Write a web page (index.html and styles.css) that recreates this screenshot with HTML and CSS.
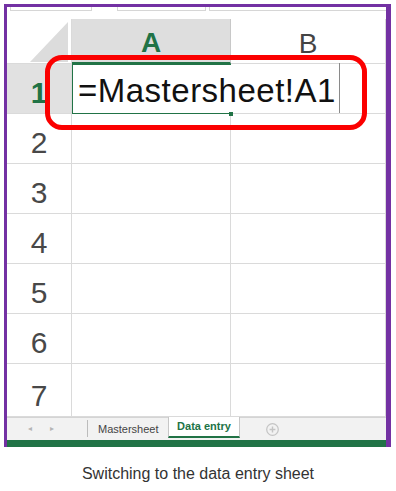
FILE: index.html
```html
<!doctype html>
<html>

<head>
    <meta charset="utf-8" />
    <title>Data entry</title>
    <link rel="stylesheet" href="styles.css">
</head>

<body>
    <div id="wrap">
        <!-- bottom edge of the formula bar boxes, cut off by the crop -->
        <div class="ribbon">
            <span class="box name"></span>
            <span class="box fx"></span>
            <span class="box bar"></span>
        </div>

        <div class="sheet">
            <div class="grid">
                <div class="corner"></div>
                <div class="colhead sel">A</div>
                <div class="colhead">B</div>

                <div class="rowhead sel">1</div>
                <div class="cell edit">
                    <span class="formula">=Mastersheet!A1</span>
                    <span class="caret"></span>
                    <i class="handle"></i>
                </div>
                <div class="cell"></div>

                <div class="rowhead">2</div>
                <div class="cell"></div>
                <div class="cell"></div>

                <div class="rowhead">3</div>
                <div class="cell"></div>
                <div class="cell"></div>

                <div class="rowhead">4</div>
                <div class="cell"></div>
                <div class="cell"></div>

                <div class="rowhead">5</div>
                <div class="cell"></div>
                <div class="cell"></div>

                <div class="rowhead">6</div>
                <div class="cell"></div>
                <div class="cell"></div>

                <div class="rowhead">7</div>
                <div class="cell"></div>
                <div class="cell"></div>
            </div>
            <!-- red annotation round the formula -->
            <div class="callout"></div>
        </div>

        <div class="tabs">
            <div class="nav">
                <span class="arrow">&#9666;</span>
                <span class="arrow">&#9656;</span>
            </div>
            <div class="tab">Mastersheet</div>
            <div class="tab active">Data entry</div>
            <span class="add">
                <svg width="13" height="13" viewBox="0 0 13 13">
                    <circle cx="6.5" cy="6.5" r="5.8" fill="none" stroke="#c4c4c4" stroke-width="1.2" />
                    <path d="M6.5 3.6v5.8M3.6 6.5h5.8" stroke="#c4c4c4" stroke-width="1.4" />
                </svg>
            </span>
        </div>
        <div class="status"></div>
    </div>

    <p class="caption">Switching to the data entry sheet</p>
</body>

</html>
```

FILE: styles.css
```css
* {
    margin: 0;
    padding: 0;
    box-sizing: border-box;
}

html,
body {
    background: #fff;
    font-family: "Liberation Sans", Arial, sans-serif;
}

#wrap {
    width: 387px;
    margin: 4px 0 0 4px;
    border: 3px solid #7331a3;
    border-right-width: 5px;
    border-bottom: none;
    background: #fff;
}

/* top strip */
#wrap .ribbon {
    height: 12px;
    display: flex;
    padding-left: 3px;
}

#wrap .ribbon .box {
    height: 4px;
    border: 1px solid #d6d6d6;
    border-top: none;
}

#wrap .ribbon .name {
    width: 82px;
    margin-right: 25px;
}

#wrap .ribbon .fx {
    width: 89px;
    margin-right: 3px;
}

#wrap .ribbon .bar {
    flex: 1;
    border-right: none;
}

/* the grid */
#wrap .sheet {
    position: relative;
}

#wrap .grid {
    display: grid;
    grid-template-columns: 65px 159px 1fr;
    grid-template-rows: 45px repeat(6, 50px) 53px;
}

#wrap .grid > div {
    border-right: 1px solid #dadada;
    border-bottom: 1px solid #dadada;
}

#wrap .corner {
    background: #fff;
}

#wrap .corner::after {
    content: "";
    display: block;
    width: 38px;
    height: 40px;
    margin: 3px 3px 0 auto;
    background: #dcdcdc;
    clip-path: polygon(100% 0, 100% 100%, 0 100%);
}

#wrap .colhead {
    display: flex;
    justify-content: center;
    align-items: flex-end;
    padding-bottom: 3px;
    font-size: 28px;
    color: #444;
}

#wrap .colhead.sel {
    background: #dedede;
    border-right-color: #c8c8c8;
    border-bottom: 2px solid #217346;
    color: #217346;
    font-weight: bold;
}

#wrap .rowhead {
    display: flex;
    justify-content: center;
    align-items: flex-end;
    padding-bottom: 3px;
    font-size: 30px;
    color: #484848;
}

#wrap .rowhead.sel {
    background: #e1e1e1;
    color: #217346;
    font-weight: bold;
}

#wrap .grid > .rowhead:last-of-type {
    align-items: flex-start;
    padding-top: 6px;
}

#wrap .cell {
    background: transparent;
}

#wrap .grid > .cell.edit {
    position: relative;
    z-index: 1;
    display: flex;
    align-items: flex-end;
    padding: 0 0 3px 5px;
    border: 1px solid #217346;
    border-right: none;
    white-space: nowrap;
}

#wrap .formula {
    font-size: 33px;
    letter-spacing: 0.5px;
    color: #111;
}

#wrap .caret {
    align-self: center;
    flex: none;
    width: 1px;
    height: 50px;
    margin-left: 3px;
    background: #8a8a8a;
}

#wrap .handle {
    position: absolute;
    right: -2px;
    bottom: -3px;
    width: 4px;
    height: 4px;
    background: #217346;
}

#wrap .callout {
    position: absolute;
    left: 38px;
    top: 36px;
    width: 322px;
    height: 75px;
    border: 5px solid #fb0000;
    border-radius: 17px;
}

/* sheet tabs */
#wrap .tabs {
    height: 23px;
    display: flex;
    align-items: stretch;
    background: #f2f2f2;
    border-top: 1px solid #d4d4d4;
}

#wrap .tabs .nav {
    width: 81px;
    display: flex;
    align-items: center;
    padding-left: 21px;
    gap: 14px;
    border-right: 1px solid #bcbcbc;
    margin: 2px 0 3px;
}

#wrap .tabs .arrow {
    font-size: 8px;
    color: #b5b5b5;
    width: 8px;
}

#wrap .tabs .tab {
    display: flex;
    align-items: center;
    padding: 0 10px 1px;
    font-size: 11px;
    color: #444;
}

#wrap .tabs .tab:nth-child(2) {
    width: 80px;
}

#wrap .tabs .tab.active {
    width: 72px;
    justify-content: center;
    padding: 0 0 1px;
    margin: -1px 0 2px;
    background: #fff;
    border-left: 1px solid #c6c6c6;
    border-right: 1px solid #c6c6c6;
    border-bottom: 2px solid #217346;
    color: #217346;
    font-weight: bold;
}

#wrap .tabs .add {
    display: flex;
    align-items: center;
    margin-left: 26px;
}

#wrap .status {
    height: 7px;
    background: #217346;
}

.caption {
    margin-top: 18px;
    text-align: center;
    font-size: 16px;
    color: #333;
}
```
